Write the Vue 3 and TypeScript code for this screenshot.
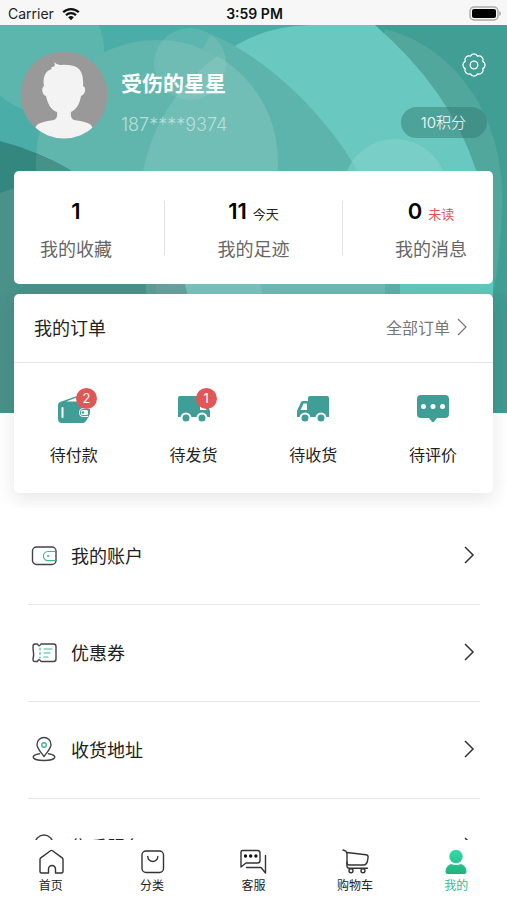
<script setup lang="ts">
interface Stat { label: string; value: number; note?: string; alert?: boolean }
interface Order { label: string; icon: 'wallet' | 'send' | 'receive' | 'comment'; badge?: number }
interface MenuItem { label: string; icon: 'account' | 'coupon' | 'address' | 'service' }
interface Tab { label: string; icon: 'home' | 'category' | 'chat' | 'cart' | 'user'; active?: boolean }

const stats: Stat[] = [
  { label: '我的收藏', value: 1 },
  { label: '我的足迹', value: 11, note: '今天' },
  { label: '我的消息', value: 0, note: '未读', alert: true },
]

const orders: Order[] = [
  { label: '待付款', icon: 'wallet', badge: 2 },
  { label: '待发货', icon: 'send', badge: 1 },
  { label: '待收货', icon: 'receive' },
  { label: '待评价', icon: 'comment' },
]

const menu: MenuItem[] = [
  { label: '我的账户', icon: 'account' },
  { label: '优惠券', icon: 'coupon' },
  { label: '收货地址', icon: 'address' },
  { label: '售后服务', icon: 'service' },
]

const tabs: Tab[] = [
  { label: '首页', icon: 'home' },
  { label: '分类', icon: 'category' },
  { label: '客服', icon: 'chat' },
  { label: '购物车', icon: 'cart' },
  { label: '我的', icon: 'user', active: true },
]
</script>

<template>
  <div class="page">
    <header class="status">
      <div class="carrier">
        <span>Carrier</span>
        <svg width="18" height="14" viewBox="0 0 18 14" fill="none" stroke="#111" stroke-width="2.3">
          <path d="M1.2 5.3a11 11 0 0 1 15.6 0" />
          <path d="M4 8.2a7 7 0 0 1 10 0" />
          <path d="M9 13.2 6.2 10.3a4 4 0 0 1 5.6 0Z" fill="#111" stroke="none" />
        </svg>
      </div>
      <strong class="time">3:59 PM</strong>
      <svg class="battery" width="32" height="15" viewBox="0 0 32 15">
        <rect x="1" y="1" width="28" height="13" rx="4" fill="#f6f6f6" stroke="#aaa" stroke-width="1.4" />
        <rect x="3" y="3" width="24" height="9" rx="2" fill="#000" />
        <path d="M30.4 5v5q1.4-.8 1.4-2.5T30.4 5" fill="#999" />
      </svg>
    </header>

    <main class="content">
      <section class="hero">
        <svg class="backdrop" viewBox="0 25 507 388" preserveAspectRatio="none" aria-hidden="true">
          <defs>
            <clipPath id="big"><circle cx="321" cy="205" r="181" /></clipPath>
          </defs>
          <rect y="25" width="507" height="388" fill="#4aada8" />
          <circle cx="42" cy="50" r="62" fill="#5db6ae" />
          <path d="M375 25H507V413H300Z" fill="#409e95" />
          <path d="M385 29C450 45 502 110 502 195 502 235 498 270 492 300V413H300Z" fill="#52a79d" />
          <path d="M226 52Q262 26 310 25H375Q450 90 476 170 490 230 492 294V413H226Z" fill="#69c8c0" />
          <path d="M196 60 211 34C270 60 325 115 357 170L385 284V413H150Z" fill="#5db4ac" />
          <circle cx="157" cy="161" r="121" fill="#60b6ad" />
          <circle cx="157" cy="161" r="121" fill="#70beb6" clip-path="url(#big)" />
          <circle cx="190" cy="64" r="36" fill="#9ad0c9" fill-opacity=".24" />
          <circle cx="190" cy="64" r="36" fill="#9ad0c9" fill-opacity=".14" clip-path="url(#big)" />
          <circle cx="395" cy="191" r="52" fill="#8ad6ce" fill-opacity=".5" />
          <path d="M0 141Q38 151 70 170L156 284V413H0Z" fill="#33877e" />
          <path d="M36 154Q54 160 70 170L110 230H36Z" fill="#469188" />
          <path d="M0 193Q70 166 118 225L146 284V413H0Z" fill="#4a918a" />
          <path d="M146 280H157V300H146Z" fill="#5f9d97" />
          <path d="M156 280H184L189 300H156Z" fill="#6b9f9e" />
          <path d="M184 280H260L264 300H189Z" fill="#7bc0bc" />
          <path d="M260 280H386V300H264Z" fill="#6db9b3" />
          <path d="M385 280H400V300H385Z" fill="#5ab0a8" />
          <path d="M400 280H493V300H400Z" fill="#63c5bb" />
          <path d="M496 294H507V413H485V300Z" fill="#409b92" />
        </svg>

        <div class="profile">
          <svg class="avatar" viewBox="0 0 88 88" role="img" aria-label="头像">
            <defs><clipPath id="disc"><circle cx="44" cy="44" r="43.5" /></clipPath></defs>
            <g clip-path="url(#disc)">
              <rect width="88" height="88" fill="#999" />
              <path d="M37 61C30 59 27 50 26 45 22 44 21 37 24 35 22 25 27 18 33 18 30 18 31 16 33 16Q36 15 34 11 37 14 40 14 53 13 59 18 64 24 63 35C67 37 65 44 61 45 60 52 57 58 51 61Q50 67 54 69 68 71 71 74 74 78 76 90H12Q14 77 17 74 20 71 34 69 38 67 37 61Z" fill="#f3f3f3" />
            </g>
          </svg>
          <div class="who">
            <h1>受伤的星星</h1>
            <p>187****9374</p>
          </div>
          <div class="side">
            <button class="settings" type="button" aria-label="设置">
              <svg width="24" height="24" viewBox="-12 -12 24 24" fill="none" stroke="#fff" stroke-width="1.3" stroke-linejoin="round">
                <path d="M3.6-8.8A4 4 0 0 1 8.8-3.6 4 4 0 0 1 8.8 3.6 4 4 0 0 1 3.6 8.8 4 4 0 0 1-3.6 8.8 4 4 0 0 1-8.8 3.6 4 4 0 0 1-8.8-3.6 4 4 0 0 1-3.6-8.8 4 4 0 0 1 3.6-8.8Z" />
                <circle r="3.8" />
              </svg>
            </button>
            <a class="points" href="#points">10积分</a>
          </div>
        </div>

        <div class="card stats">
          <template v-for="(s, i) in stats" :key="s.label">
            <span v-if="i" class="rule"></span>
            <a class="stat" href="#stats">
              <span class="figure"><b>{{ s.value }}</b><small v-if="s.note" :class="{ alert: s.alert }">{{ s.note }}</small></span>
              <span class="caption">{{ s.label }}</span>
            </a>
          </template>
        </div>

        <section class="card orders">
          <div class="orders-head">
            <h2>我的订单</h2>
            <a href="#orders">全部订单
              <svg width="10" height="18" viewBox="0 0 10 18" fill="none" stroke="#777" stroke-width="1.2"><path d="m1 1 8 8-8 8" /></svg>
            </a>
          </div>
          <div class="order-grid">
            <a v-for="o in orders" :key="o.label" class="order" href="#orders">
              <span class="order-icon">
                <svg v-if="o.icon === 'wallet'" width="34" height="30" viewBox="0 0 34 30">
                  <path d="M3 8 20 2Q24 1 25 5L26 7H30Q32 7 32 9V22L29 27Q28 29 26 29H5Q1 29 1 25V11Q1 9 3 8Z" fill="#3f9e95" />
                  <path d="M9 7.500 20 3.500 21 7.500Z" fill="#fff" />
                  <rect x="4.500" y="13" width="2" height="11" rx="1" fill="#fff" />
                  <path d="M34 14H27Q22 14 22 18.500T27 23H31V21H34Z" fill="#fff" />
                  <path d="M26 15H33V19Q33 22 29 22H26Q23 22 23 18.500T26 15" fill="#3f9e95" />
                  <rect x="24" y="16" width="7" height="5" rx="1.500" fill="#fff" />
                  <circle cx="26" cy="18.500" r="1.300" fill="#3f9e95" />
                </svg>
                <svg v-else-if="o.icon === 'comment'" width="34" height="30" viewBox="0 0 34 30">
                  <path d="M5 1H29Q33 1 33 5V20Q33 24 29 24H21L18.200 27.600Q17 29 15.800 27.600L13 24H5Q1 24 1 20V5Q1 1 5 1Z" fill="#3f9e95" />
                  <g fill="#fff"><circle cx="7.500" cy="12.500" r="2.500" /><circle cx="17" cy="12.500" r="2.500" /><circle cx="26.500" cy="12.500" r="2.500" /></g>
                </svg>
                <svg v-else :class="{ flip: o.icon === 'send' }" width="34" height="30" viewBox="0 0 34 30">
                  <path d="M14 2H31Q33 2 33 4V23H1V17L5 8Q6 7 7 7H12V4Q12 2 14 2Z" fill="#3f9e95" />
                  <path d="M7.500 9.500H11V16H4.500Z" fill="#fff" />
                  <g fill="#3f9e95" stroke="#fff" stroke-width="2"><circle cx="9" cy="24" r="4.500" /><circle cx="25" cy="24" r="4.500" /></g>
                </svg>
                <i v-if="o.badge" class="badge">{{ o.badge }}</i>
              </span>
              <span>{{ o.label }}</span>
            </a>
          </div>
        </section>
      </section>

      <nav class="menu">
        <a v-for="m in menu" :key="m.label" class="row" href="#menu">
          <svg class="row-icon" width="26" height="26" viewBox="0 0 26 26" fill="none" stroke="#444" stroke-width="1.4" stroke-linejoin="round" stroke-linecap="round">
            <template v-if="m.icon === 'account'">
              <rect x="1.500" y="5" width="23.500" height="17.500" rx="4" />
              <path d="M24 9.500H17a4.600 4.600 0 0 0 0 9.200h7" stroke="#3fb795" stroke-width="1.200" />
              <circle cx="17" cy="14" r=".7" fill="#3fb795" stroke="#3fb795" stroke-width=".8" />
            </template>
            <template v-else-if="m.icon === 'coupon'">
              <path d="M4 5H6.500Q8 8.500 10 5H22.500Q25 5 25 7.500V20Q25 22.500 22.500 22.500H10Q8 19 6.500 22.500H4Q2 22.500 2 20 3 16.500 2.500 13.500T2 7.500Q2 5 4 5Z" />
              <g stroke="#3fb795" stroke-width="1.200"><path d="M9 9v10" stroke-dasharray="2 2.500" /><path d="M13 10h8M13 14h6M13 18h4" /></g>
            </template>
            <template v-else-if="m.icon === 'address'">
              <path d="M13 20.500C9.500 15.500 6 12.500 6 8.500a7 7 0 0 1 14 0c0 4-3.500 7-7 12Z" />
              <path d="M8.500 17.800C-1 19 0 24.500 13 24.500S27 19 17.500 17.800" />
              <circle cx="13" cy="9" r="2.300" stroke="#3fb795" />
            </template>
            <template v-else>
              <path d="M4 14V11a9 9 0 0 1 18 0v3" />
              <path d="M4 12h3v7H4q-3 0-3-3.500T4 12M22 12h-3v7h3q3 0 3-3.500T22 12" />
              <path d="M22 19q-2 4-8 4" stroke="#3fb795" />
            </template>
          </svg>
          <span>{{ m.label }}</span>
          <svg class="chevron" width="12" height="18" viewBox="0 0 12 18" fill="none" stroke="#333" stroke-width="1.500"><path d="m2 1 8 8-8 8" /></svg>
        </a>
      </nav>
    </main>

    <nav class="tabs">
      <a v-for="t in tabs" :key="t.label" class="tab" :class="{ active: t.active }" href="#tab">
        <svg width="28" height="28" viewBox="0 0 28 28" fill="none" stroke="#333" stroke-width="1.400" stroke-linejoin="round" stroke-linecap="round">
          <path v-if="t.icon === 'home'" d="M4.500 25q-1.500 0-1.500-1.500V11.500q0-1 .8-1.600L13.500 2.700q1-.7 2 0l9.700 7.200q.8.600.8 1.600v12q0 1.500-1.500 1.500h-6v-4a3.500 3.500 0 0 0-7 0v4Z" />
          <template v-else-if="t.icon === 'category'">
            <rect x="4" y="3" width="21.500" height="21.500" rx="4" />
            <path d="M9.800 8.500a5 5 0 0 0 10 0" />
          </template>
          <template v-else-if="t.icon === 'chat'">
            <path d="M3.500 2.500H18.500Q21 2.500 21 5V12.500Q21 15 18.500 15H7L2 19V4Q2 2.500 3.500 2.500Z" />
            <path d="M26.500 7.500V25l-4.500-5.500H7.500" />
            <g fill="#111" stroke="none"><circle cx="6.500" cy="8" r="1.700" /><circle cx="11.700" cy="8" r="1.700" /><circle cx="16.900" cy="8" r="1.700" /></g>
          </template>
          <template v-else-if="t.icon === 'cart'">
            <path d="M2 2 5 3.200 6 5.500V15Q6 17 8.500 17H22.500q3 0 4-4l.6-4Q27.200 7 25 6.700L6 4.500" />
            <path d="M6 14v4q0 2.200 2.500 2.200H26.500" />
            <circle cx="10" cy="22.800" r="2" /><circle cx="22" cy="22.800" r="2" />
          </template>
          <g v-else stroke="none">
            <defs><linearGradient id="person" x1="0" y1="0" x2="0" y2="28" gradientUnits="userSpaceOnUse"><stop stop-color="#35dfaa" /><stop offset="1" stop-color="#1fae7b" /></linearGradient></defs>
            <circle cx="14" cy="8.500" r="6.700" fill="url(#person)" />
            <path d="M9 16q5 2 10 0 5.500 2 5.500 7.500Q24.500 26 22 26H6q-2.500 0-2.500-2.500Q3.500 18 9 16Z" fill="url(#person)" />
          </g>
        </svg>
        <span>{{ t.label }}</span>
      </a>
    </nav>
  </div>
</template>

<style>
body {
  margin: 0;
  background: #fff;
}
</style>

<style scoped>
.page {
  height: 100vh;
  display: flex;
  flex-direction: column;
  overflow: hidden;
  background: #fff;
  color: #222;
  font-family: Inter, "Noto Sans CJK SC", sans-serif;
}
.page * {
  box-sizing: border-box;
}
a {
  color: inherit;
  text-decoration: none;
}
h1, h2, p {
  margin: 0;
}
svg {
  display: block;
  flex: none;
}
.status {
  flex: none;
  height: 25px;
  padding: 2px 6px 0 8px;
  display: grid;
  grid-template-columns: 1fr auto 1fr;
  align-items: center;
  background: #f7f7f7;
  font-size: 14px;
}
.carrier {
  display: flex;
  align-items: center;
  gap: 8px;
}
.time {
  font-weight: 600;
  color: #111;
}
.battery {
  justify-self: end;
}
.content {
  flex: 1;
  min-height: 0;
  overflow: hidden;
}
.hero {
  position: relative;
  padding: 26px 14px 15px;
  overflow: hidden;
}
.backdrop {
  position: absolute;
  top: 0;
  left: 0;
  width: 100%;
  height: 388px;
}
.profile {
  position: relative;
  display: flex;
  align-items: flex-start;
  gap: 13px;
  height: 120px;
  padding: 0 6px;
  color: #fff;
}
.avatar {
  width: 88px;
  height: 88px;
}
.who {
  flex: 1;
  padding-top: 18px;
}
.who h1 {
  font-size: 21px;
  line-height: 30px;
  font-weight: 700;
}
.who p {
  margin-top: 14px;
  font-size: 18px;
  line-height: 24px;
  font-weight: 300;
  color: #b9dfda;
}
.side {
  display: flex;
  flex-direction: column;
  align-items: flex-end;
  gap: 30px;
}
.settings {
  margin: 2px 1px 0 0;
  padding: 0;
  border: 0;
  background: none;
}
.points {
  padding: 0 21px 0 20px;
  border-radius: 16px;
  background: rgba(50, 124, 116, 0.5);
  font-size: 15px;
  font-weight: 300;
  line-height: 31px;
}
.card {
  position: relative;
  border-radius: 5px;
  background: #fff;
}
.stats {
  display: flex;
  justify-content: space-between;
  align-items: center;
  height: 113px;
  padding: 0 26px;
}
.rule {
  width: 1px;
  height: 54px;
  background: #e2e2e2;
}
.stat {
  width: 72px;
  display: flex;
  flex-direction: column;
  align-items: center;
  padding-top: 4px;
  gap: 12px;
  white-space: nowrap;
}
.figure {
  display: flex;
  align-items: baseline;
  gap: 6px;
  height: 28px;
  line-height: 28px;
}
.figure b {
  font-size: 22px;
  font-weight: 600;
  color: #000;
}
.figure small {
  font-size: 13px;
  line-height: 20px;
}
.figure .alert {
  color: #e35252;
}
.caption {
  font-size: 18px;
  line-height: 26px;
  color: #666;
}
.orders {
  margin-top: 10px;
  box-shadow: 0 6px 20px rgba(0, 0, 0, 0.1);
}
.orders-head {
  display: flex;
  justify-content: space-between;
  align-items: center;
  height: 69px;
  padding: 0 26px 3px 20px;
  border-bottom: 1px solid #e4e7e7;
}
.orders-head h2 {
  font-size: 18px;
  font-weight: 400;
}
.orders-head a {
  display: flex;
  align-items: center;
  gap: 7px;
  font-size: 16px;
  color: #777;
}
.order-grid {
  display: grid;
  grid-template-columns: repeat(4, 1fr);
  height: 130px;
  padding-top: 31px;
}
.order {
  display: flex;
  flex-direction: column;
  align-items: center;
  gap: 19px;
  font-size: 16px;
  line-height: 24px;
}
.order-icon {
  position: relative;
}
.flip {
  transform: scaleX(-1);
}
.badge {
  position: absolute;
  top: -6px;
  right: -6px;
  width: 21px;
  height: 21px;
  border-radius: 50%;
  background: #e15656;
  color: #fff;
  font-size: 13px;
  font-style: normal;
  line-height: 21px;
  text-align: center;
}
.menu {
  padding: 0 27px 0 28px;
}
.row {
  display: flex;
  align-items: center;
  height: 97px;
  padding: 0 5px 2px 3px;
  border-bottom: 1px solid #e6e6e6;
  font-size: 18px;
}
.row-icon {
  margin-right: 14px;
}
.chevron {
  margin-left: auto;
}
.tabs {
  flex: none;
  display: grid;
  grid-template-columns: repeat(5, 1fr);
  height: 60px;
  padding-top: 8px;
  background: #fff;
}
.tab {
  display: flex;
  flex-direction: column;
  align-items: center;
  gap: 1px;
  font-size: 12px;
  line-height: 18px;
}
.active {
  color: #2cc08c;
}
</style>
